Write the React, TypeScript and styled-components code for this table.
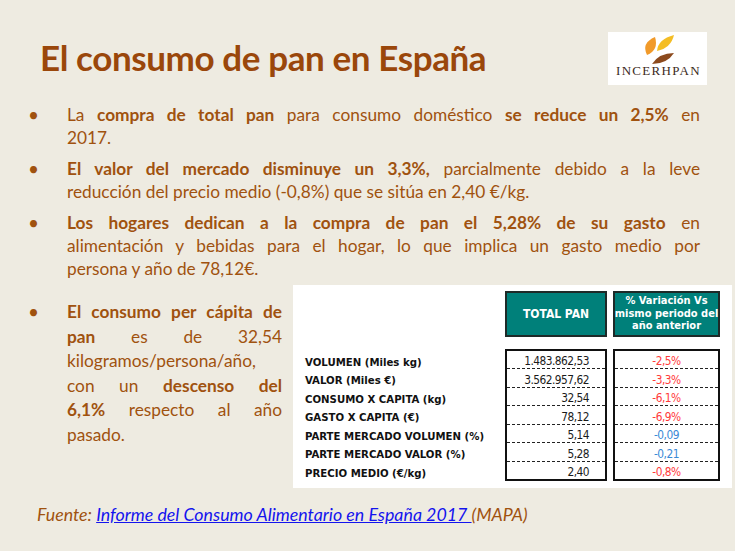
import styled, { createGlobalStyle } from "styled-components";

const GlobalStyle = createGlobalStyle`
  html, body {
    margin: 0;
    padding: 0;
    background: #eeebe1;
  }
`;

const Slide = styled.div`
  width: 735px;
  height: 551px;
  overflow: hidden;
  background: #eeebe1;
  font-family: Lato, "Open Sans", sans-serif;
  color: #a0520f;
  display: flex;
  flex-direction: column;
`;

const Header = styled.header`
  display: flex;
  justify-content: space-between;
  align-items: flex-start;
  padding: 32px 28px 0 40px;
  height: 71px;
`;

const Title = styled.h1`
  margin: 5px 0 0;
  font-size: 35px;
  font-weight: 700;
  line-height: 40px;
  color: #9a470b;
  letter-spacing: -0.4px;
`;

const Logo = styled.div`
  width: 99px;
  height: 53px;
  background: #fff;
  display: flex;
  flex-direction: column;
  align-items: center;
  svg {
    display: block;
  }
`;

const LogoText = styled.span`
  font-family: "Liberation Serif", serif;
  font-size: 13px;
  line-height: 14px;
  letter-spacing: 1.3px;
  color: #3b2a22;
  margin-top: -2px;
  padding-left: 2px;
`;

const Bullets = styled.ul`
  list-style: none;
  margin: 0;
  padding: 0 35px 0 28px;
  display: flex;
  flex-direction: column;
  gap: 8px;
`;

const Item = styled.li`
  display: flex;
`;

const Dot = styled.span`
  flex: 0 0 39px;
  font-size: 19px;
  line-height: 23px;
`;

const Para = styled.div<{ $lh?: number }>`
  flex: 1;
  font-size: 17.3px;
  line-height: ${(p) => p.$lh ?? 23}px;
`;

const Line = styled.span<{ $last?: boolean }>`
  display: block;
  text-align: justify;
  text-align-last: ${(p) => (p.$last ? "left" : "justify")};
  white-space: nowrap;
`;

const Lower = styled.div`
  display: flex;
  align-items: flex-start;
  margin-top: 5px;
  padding-left: 28px;
`;

const SideItem = styled.div`
  display: flex;
  width: 254px;
  padding-top: 15px;
`;

const Panel = styled.div`
  margin-left: 11px;
  width: 421px;
  height: 197px;
  background: #fff;
  padding: 6px 6px 0 12px;
  display: grid;
  grid-template-columns: 194px 102px 107px;
  grid-template-rows: 46px 132px;
  column-gap: 6px;
  row-gap: 12px;
  font-family: "DejaVu Sans Condensed", "DejaVu Sans", Verdana, sans-serif;
`;

const HeadBox = styled.div<{ $size: number }>`
  background: #00807a;
  border: 2px solid #1e2a28;
  box-sizing: border-box;
  color: #fff;
  font-weight: 700;
  font-size: ${(p) => p.$size}px;
  line-height: 12.5px;
  text-align: center;
  white-space: nowrap;
  display: flex;
  align-items: center;
  justify-content: center;
`;

const Labels = styled.div`
  display: flex;
  flex-direction: column;
  padding-top: 1px;
`;

const Label = styled.div`
  height: 18.5px;
  display: flex;
  align-items: flex-end;
  font-size: 11.3px;
  font-weight: 700;
  color: #111;
  white-space: nowrap;
`;

const DataBox = styled.div`
  border: 2px solid #111;
  box-sizing: border-box;
  display: flex;
  flex-direction: column;
`;

const Cell = styled.div<{ $align: "right" | "center"; $tone?: string }>`
  flex: 1;
  display: flex;
  align-items: flex-end;
  justify-content: ${(p) => (p.$align === "right" ? "flex-end" : "center")};
  padding-right: ${(p) => (p.$align === "right" ? "16px" : "0")};
  font-size: 11.8px;
  letter-spacing: -0.5px;
  line-height: 14px;
  color: ${(p) => p.$tone ?? "#1a1a1a"};
  border-bottom: 1px dashed #222;
  &:last-child {
    border-bottom: none;
  }
`;

const Footer = styled.div`
  margin-top: 15px;
  padding-left: 37px;
  font-size: 17.8px;
  font-style: italic;
  color: #a0520f;
  a {
    color: #1414ee;
    text-decoration: underline;
  }
`;

const rows = [
  { label: "VOLUMEN (Miles kg)", total: "1.483.862,53", varia: "-2,5%", up: false },
  { label: "VALOR (Miles €)", total: "3.562.957,62", varia: "-3,3%", up: false },
  { label: "CONSUMO X CAPITA (kg)", total: "32,54", varia: "-6,1%", up: false },
  { label: "GASTO X CAPITA (€)", total: "78,12", varia: "-6,9%", up: false },
  { label: "PARTE MERCADO VOLUMEN (%)", total: "5,14", varia: "-0,09", up: true },
  { label: "PARTE MERCADO VALOR (%)", total: "5,28", varia: "-0,21", up: true },
  { label: "PRECIO MEDIO (€/kg)", total: "2,40", varia: "-0,8%", up: false },
];

const LogoMark = () => (
  <Logo>
    <svg width="99" height="34" viewBox="0 0 99 34">
      <path d="M39 23 Q33 11 47 5 Q51 18 39 23 Z" fill="#f19a2a" />
      <path d="M49 19 Q50 7 66 3 Q63 16 49 19 Z" fill="#f4bd24" />
      <path d="M44 32 Q51 21 66 21 Q59 32 44 32 Z" fill="#8c4a1d" />
    </svg>
    <LogoText>INCERHPAN</LogoText>
  </Logo>
);

export default function App() {
  return (
    <Slide>
      <GlobalStyle />
      <Header>
        <Title>El consumo de pan en España</Title>
        <LogoMark />
      </Header>
      <Bullets>
        <Item>
          <Dot>•</Dot>
          <Para>
            <Line>
              La <b>compra de total pan</b> para consumo doméstico{" "}
              <b>se reduce un 2,5%</b> en
            </Line>
            <Line $last>2017.</Line>
          </Para>
        </Item>
        <Item>
          <Dot>•</Dot>
          <Para>
            <Line>
              <b>El valor del mercado disminuye un 3,3%,</b> parcialmente debido a la leve
            </Line>
            <Line $last>reducción del precio medio (-0,8%) que se sitúa en 2,40 €/kg.</Line>
          </Para>
        </Item>
        <Item>
          <Dot>•</Dot>
          <Para>
            <Line>
              <b>Los hogares dedican a la compra de pan el 5,28% de su gasto</b> en
            </Line>
            <Line>alimentación y bebidas para el hogar, lo que implica un gasto medio por</Line>
            <Line $last>persona y año de 78,12€.</Line>
          </Para>
        </Item>
      </Bullets>
      <Lower>
        <SideItem>
          <Dot>•</Dot>
          <Para $lh={24.5}>
            <Line>
              <b>El consumo per cápita de</b>
            </Line>
            <Line>
              <b>pan</b> es de 32,54
            </Line>
            <Line $last>kilogramos/persona/año,</Line>
            <Line>
              con un <b>descenso del</b>
            </Line>
            <Line>
              <b>6,1%</b> respecto al año
            </Line>
            <Line $last>pasado.</Line>
          </Para>
        </SideItem>
        <Panel>
          <div />
          <HeadBox $size={12}>TOTAL PAN</HeadBox>
          <HeadBox $size={11}>
            % Variación Vs
            <br />
            mismo periodo del
            <br />
            año anterior
          </HeadBox>
          <Labels>
            {rows.map((r) => (
              <Label key={r.label}>{r.label}</Label>
            ))}
          </Labels>
          <DataBox>
            {rows.map((r) => (
              <Cell key={r.label} $align="right">
                {r.total}
              </Cell>
            ))}
          </DataBox>
          <DataBox>
            {rows.map((r) => (
              <Cell key={r.label} $align="center" $tone={r.up ? "#3a8ad6" : "#ff3b3b"}>
                {r.varia}
              </Cell>
            ))}
          </DataBox>
        </Panel>
      </Lower>
      <Footer>
        Fuente: <a href="#">Informe del Consumo Alimentario en España 2017 </a>(MAPA)
      </Footer>
    </Slide>
  );
}
